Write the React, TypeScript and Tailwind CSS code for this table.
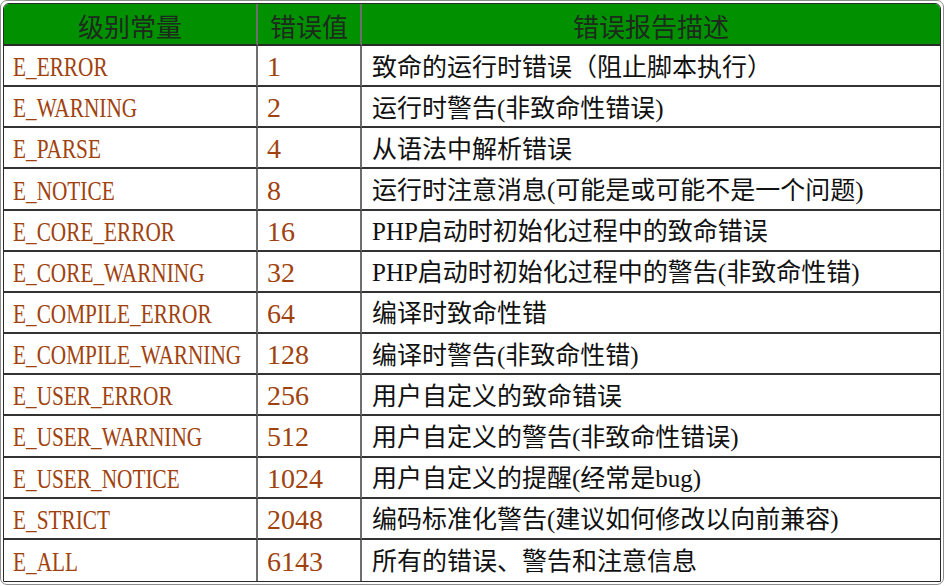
import React from "react";

const rows: [string, string, string][] = [
  ["E_ERROR", "1", "致命的运行时错误（阻止脚本执行）"],
  ["E_WARNING", "2", "运行时警告(非致命性错误)"],
  ["E_PARSE", "4", "从语法中解析错误"],
  ["E_NOTICE", "8", "运行时注意消息(可能是或可能不是一个问题)"],
  ["E_CORE_ERROR", "16", "PHP启动时初始化过程中的致命错误"],
  ["E_CORE_WARNING", "32", "PHP启动时初始化过程中的警告(非致命性错)"],
  ["E_COMPILE_ERROR", "64", "编译时致命性错"],
  ["E_COMPILE_WARNING", "128", "编译时警告(非致命性错)"],
  ["E_USER_ERROR", "256", "用户自定义的致命错误"],
  ["E_USER_WARNING", "512", "用户自定义的警告(非致命性错误)"],
  ["E_USER_NOTICE", "1024", "用户自定义的提醒(经常是bug)"],
  ["E_STRICT", "2048", "编码标准化警告(建议如何修改以向前兼容)"],
  ["E_ALL", "6143", "所有的错误、警告和注意信息"],
];

const serif = "font-['Liberation_Serif','Noto_Sans_CJK_SC',serif]";
const cjk = "font-['Noto_Sans_CJK_SC','Liberation_Serif',sans-serif]";

export default function App() {
  return (
    <div className="w-[944px] h-[586px] bg-white overflow-hidden">
      <div className="w-[944px] h-[585px] border border-[#8c8c8c] rounded-[7px] p-[2px] bg-white">
        <div className="h-full grid grid-cols-[254px_104px_1fr] grid-rows-[42px_repeat(13,1fr)] border-l border-t border-r border-b border-[#2a2a2a] rounded-tl-[6px] rounded-tr-[6px] overflow-hidden">
          <div className={`bg-[#009000] border-r-2 border-r-[#6e6e6e] border-b-2 border-b-[#2a2a2a] flex items-center justify-center pt-[3px] text-[26px] leading-none text-[#1e2a1e] ${cjk}`}>
            级别常量
          </div>
          <div className={`bg-[#009000] border-r-2 border-r-[#6e6e6e] border-b-2 border-b-[#2a2a2a] flex items-center justify-center pt-[3px] text-[26px] leading-none text-[#1e2a1e] ${cjk}`}>
            错误值
          </div>
          <div className={`bg-[#009000] border-b-2 border-b-[#2a2a2a] flex items-center justify-center pt-[3px] text-[26px] leading-none text-[#1e2a1e] ${cjk}`}>
            错误报告描述
          </div>
          {rows.map(([name, val, desc], i) => {
            const last = i === rows.length - 1;
            const rowBorder = last ? "" : "border-b-2 border-b-[#333333]";
            return (
              <React.Fragment key={name}>
                <div className={`border-r-2 border-r-[#6e6e6e] ${rowBorder} flex items-center pl-[9px] pt-[3px] overflow-visible whitespace-nowrap`}>
                  <span className={`inline-block origin-left scale-x-[0.76] text-[28px] leading-none text-[#a0420e] ${serif}`}>
                    {name}
                  </span>
                </div>
                <div className={`border-r-2 border-r-[#6e6e6e] ${rowBorder} flex items-center pl-[9px] pt-[3px] whitespace-nowrap`}>
                  <span className={`text-[28px] leading-none text-[#a0420e] ${serif}`}>{val}</span>
                </div>
                <div className={`${rowBorder} flex items-center pl-[10px] pt-[3px] whitespace-nowrap`}>
                  <span className={`text-[25px] leading-none text-[#111] ${serif}`}>{desc}</span>
                </div>
              </React.Fragment>
            );
          })}
        </div>
      </div>
    </div>
  );
}
